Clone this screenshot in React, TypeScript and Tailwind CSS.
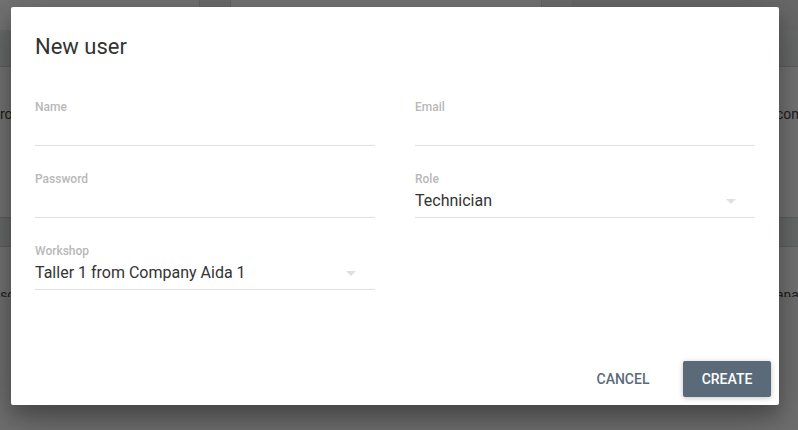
import React from 'react';

function DropArrow(): React.ReactElement {
  return (
    <svg viewBox="0 0 24 24" className="mr-3 h-6 w-6 shrink-0 fill-[#e0e0e0]">
      <path d="M7 10l5 5 5-5z" />
    </svg>
  );
}

function Field({
  label,
  value,
  select,
}: {
  label: string;
  value?: string;
  select?: boolean;
}): React.ReactElement {
  return (
    <div className="flex flex-col border-b border-[#e0e0e0] pb-1">
      <div className="h-4 text-[12px] leading-4 font-medium text-[#b8b8b8]">{label}</div>
      <div className="mt-0.5 flex h-6 items-center justify-between text-[16px] leading-6 text-[#333]">
        <span>{value ?? ''}</span>
        {select && <DropArrow />}
      </div>
    </div>
  );
}

export default function App(): React.ReactElement {
  return (
    <div className="relative h-[430px] w-[798px] overflow-hidden bg-white font-['Roboto',sans-serif]">
      {/* page behind the dialog */}
      <div className="flex h-full flex-col text-[14px] text-[#444]">
        <div className="flex h-[30px]">
          <div className="w-[199px] bg-[#f8f8f8]" />
          <div className="w-[32px] border-x border-[#dcdcdc] bg-[#ebebeb]" />
          <div className="w-[310px] bg-[#fafafa]" />
          <div className="w-[32px] border-x border-[#dcdcdc] bg-[#ebebeb]" />
          <div className="flex-1 bg-[#e2e2e2]" />
        </div>
        <div className="h-[37px] border-b border-[#d0d0d0] bg-[#e3e6e6]" />
        <div className="flex h-[150px] items-start justify-between bg-[#fbfbfb] pt-[37px]">
          <span className="leading-5">ro</span>
          <span className="w-[22px] leading-5 whitespace-nowrap">com</span>
        </div>
        <div className="h-[30px] border-y border-[#d0d0d0] bg-[#e3e6e6]" />
        <div className="flex h-[50px] items-start justify-between border-b border-[#d6d6d6] bg-[#fbfbfb] pt-[38px]">
          <span className="leading-5">sc</span>
          <span className="w-[22px] leading-5 whitespace-nowrap">ana</span>
        </div>
        <div className="flex-1 bg-[#f2f2f2]" />
      </div>

      {/* overlay + dialog */}
      <div className="absolute inset-0 flex bg-black/[0.54] pt-[7px] pl-[11px]">
        <div className="flex h-[398px] w-[768px] flex-col rounded-[2px] bg-white shadow-[0_14px_45px_rgba(0,0,0,0.25),0_10px_18px_rgba(0,0,0,0.22)]">
          <h3 className="px-6 pt-6 pb-5 text-[22px] leading-8 font-normal text-[#333]">New user</h3>
          <div className="grid flex-1 grid-cols-2 content-start gap-x-10 gap-y-[25px] px-6 pt-4">
            <Field label="Name" />
            <Field label="Email" />
            <Field label="Password" />
            <Field label="Role" value="Technician" select />
            <Field label="Workshop" value="Taller 1 from Company Aida 1" select />
          </div>
          <div className="flex justify-end gap-4 p-2">
            <button className="h-9 min-w-[88px] rounded-[2px] px-4 text-[14px] font-medium text-[#5b6b7b] uppercase">
              Cancel
            </button>
            <button className="h-9 min-w-[88px] rounded-[2px] bg-[#5b6a79] px-4 text-[14px] font-medium text-white uppercase shadow-[0_1px_6px_rgba(0,0,0,0.12),0_1px_4px_rgba(0,0,0,0.12)]">
              Create
            </button>
          </div>
        </div>
      </div>
    </div>
  );
}
